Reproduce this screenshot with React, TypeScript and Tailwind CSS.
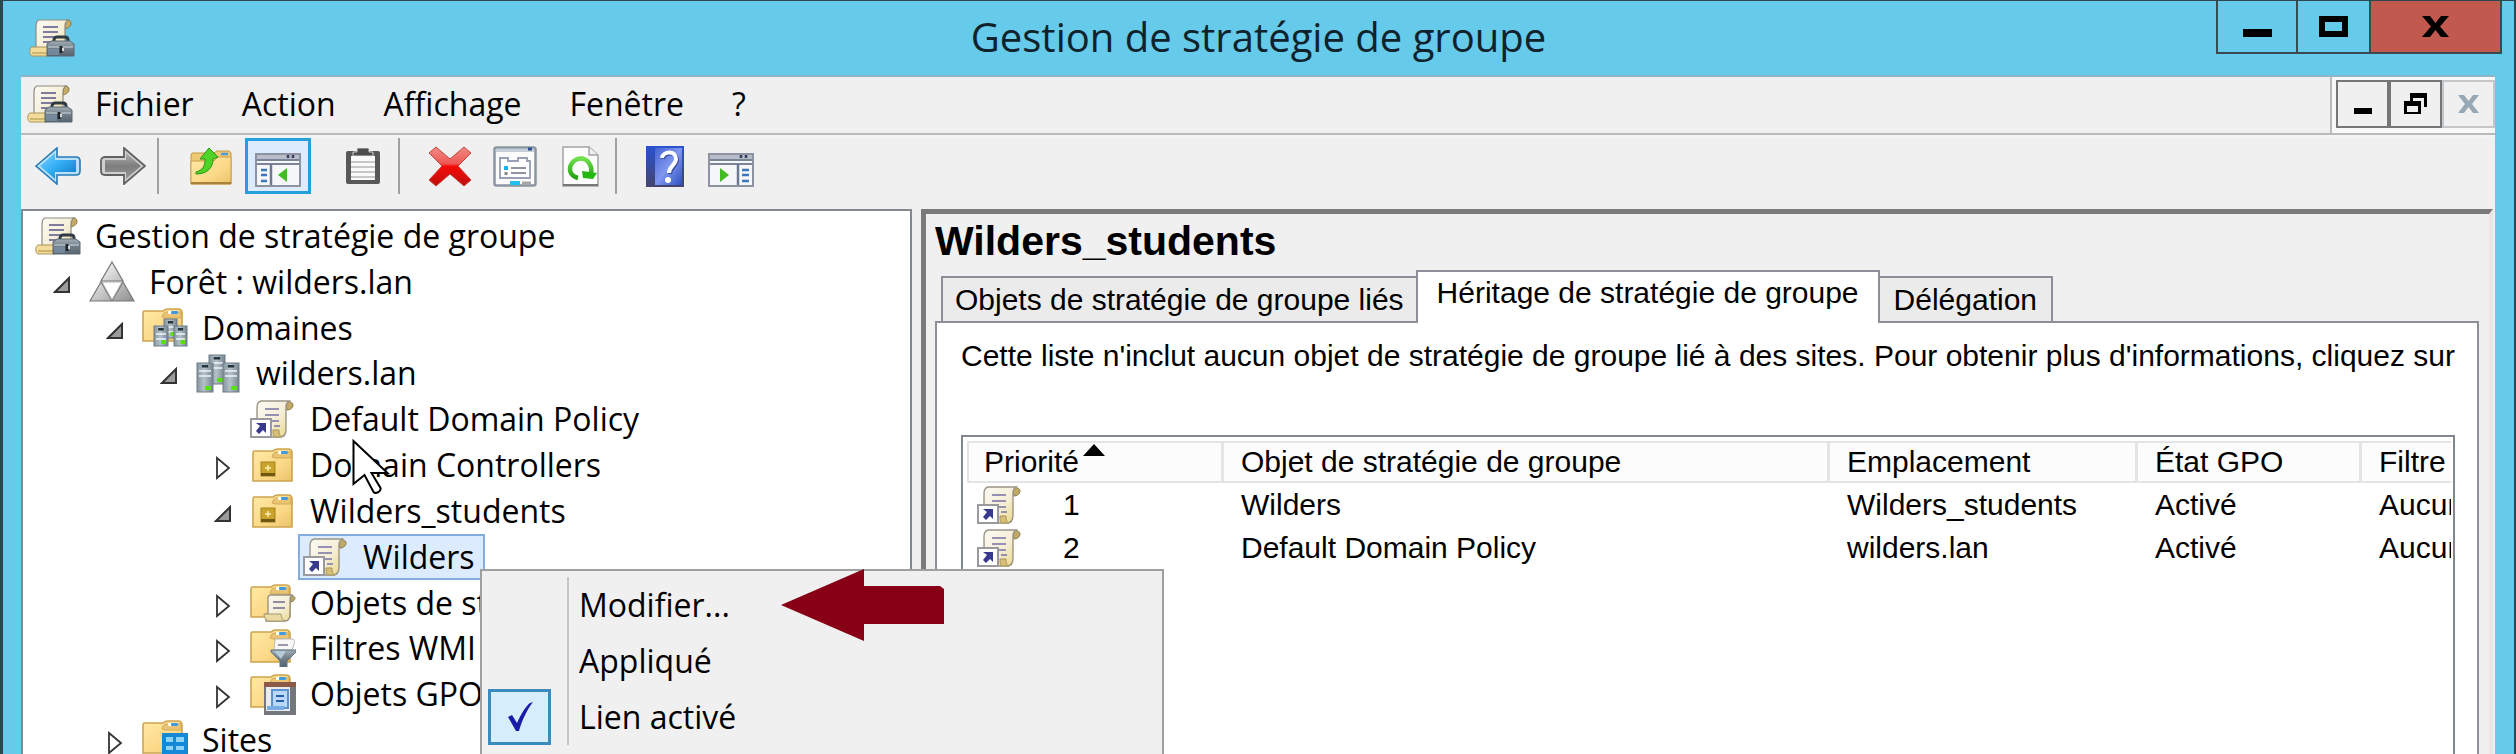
import type { ReactNode } from "react";

const UI = "font-['Open_Sans','Noto_Sans',sans-serif]";
const CLASSIC = "font-['Liberation_Sans',Arial,sans-serif]";

/* ---------- shared gradients ---------- */

function Gradients() {
  return (
    <svg width="0" height="0" className="absolute" aria-hidden="true">
      <defs>
        <linearGradient id="paper" x1="0" y1="0" x2="1" y2="1">
          <stop offset="0" stopColor="#fbfaf4" />
          <stop offset="0.55" stopColor="#f5eed6" />
          <stop offset="1" stopColor="#ead583" />
        </linearGradient>
        <linearGradient id="folder" x1="0" y1="0" x2="1" y2="1">
          <stop offset="0" stopColor="#ffe9a6" />
          <stop offset="0.6" stopColor="#fbd988" />
          <stop offset="1" stopColor="#ebc26c" />
        </linearGradient>
        <linearGradient id="server" x1="0" y1="0" x2="1" y2="0">
          <stop offset="0" stopColor="#8796a0" />
          <stop offset="0.45" stopColor="#b4c1c9" />
          <stop offset="1" stopColor="#76858f" />
        </linearGradient>
        <linearGradient id="steel" x1="0" y1="0" x2="0" y2="1">
          <stop offset="0" stopColor="#a3adb5" />
          <stop offset="0.5" stopColor="#6f7e89" />
          <stop offset="1" stopColor="#56646f" />
        </linearGradient>
        <linearGradient id="grey3d" x1="0" y1="0" x2="1" y2="1">
          <stop offset="0.2" stopColor="#f1f1f1" />
          <stop offset="1" stopColor="#8d8d8d" />
        </linearGradient>
        <linearGradient id="blueArrow" x1="0" y1="0" x2="1" y2="1">
          <stop offset="0" stopColor="#7fd0ff" />
          <stop offset="0.45" stopColor="#35b1f5" />
          <stop offset="1" stopColor="#0b74c4" />
        </linearGradient>
        <linearGradient id="greyArrow" x1="0" y1="0" x2="0" y2="1">
          <stop offset="0" stopColor="#b0b0b0" />
          <stop offset="0.5" stopColor="#7d7d7d" />
          <stop offset="1" stopColor="#989898" />
        </linearGradient>
        <linearGradient id="redX" x1="0" y1="0" x2="0" y2="1">
          <stop offset="0" stopColor="#f28b86" />
          <stop offset="0.42" stopColor="#ee5a55" />
          <stop offset="0.5" stopColor="#f50a08" />
          <stop offset="1" stopColor="#bd0f0c" />
        </linearGradient>
        <linearGradient id="help" x1="0" y1="0" x2="1" y2="1">
          <stop offset="0" stopColor="#4564d2" />
          <stop offset="0.5" stopColor="#7f97ee" />
          <stop offset="1" stopColor="#2f50c0" />
        </linearGradient>
        <linearGradient id="helpSpine" x1="0" y1="0" x2="0" y2="1">
          <stop offset="0" stopColor="#2a52d2" />
          <stop offset="1" stopColor="#45446f" />
        </linearGradient>
        <linearGradient id="green" x1="0" y1="0" x2="0" y2="1">
          <stop offset="0" stopColor="#6fe04a" />
          <stop offset="1" stopColor="#23a012" />
        </linearGradient>
      </defs>
    </svg>
  );
}

function Svg({ w, h, children }: { w: number; h: number; children: ReactNode }) {
  return (
    <svg width={w} height={h} viewBox={`0 0 ${w} ${h}`} fill="none" aria-hidden="true" className="block shrink-0">
      {children}
    </svg>
  );
}

/* ---------- tree and list icons ---------- */

function ConsoleIcon() {
  return (
    <Svg w={46} h={38}>
      <path d="M36 2c1-2 6-1 6 2 0 3-2 5-6 6z" fill="#c4ab66" stroke="#857848" />
      <path d="M10 1h29c-3 2-3 4-3 8v27H7V10c0-5 0-8 3-9z" fill="url(#paper)" stroke="#8f8b80" strokeWidth="1.2" />
      <path d="M14 8h15M14 13h15M14 18h13M14 23h8" stroke="#7f7b9d" strokeWidth="2" />
      <path d="M3 28h17v9H3c-3-1-3-8 0-9z" fill="#f3dc9a" stroke="#a8945a" />
      <path d="M3 34h16" stroke="#cfb670" strokeWidth="2" />
      <path d="M25 23v-2c0-2 2-3 3-3h8c2 0 3 1 3 3v2" stroke="#2f3a42" strokeWidth="3" />
      <path d="M18 25l4-3h19l4 3v12H18z" fill="url(#steel)" stroke="#5a6872" />
      <path d="M19 28h25" stroke="#b3bec6" strokeWidth="1.5" />
      <path d="M19 30h11v6H19z" fill="#7c93a8" opacity=".7" />
      <path d="M32 27v7" stroke="#20262b" strokeWidth="3" />
      <path d="M34 29v3" stroke="#fff" strokeWidth="1.5" />
    </Svg>
  );
}

function ScrollShape() {
  return (
    <>
      <path d="M36 3c0-2 7-2 7 2 0 3-3 5-6 5z" fill="#bfa964" stroke="#8a7d50" />
      <path d="M11 1h28c-3 2-3 4-3 8v20c0 4-1 8-6 8H7V11c0-6 0-9 4-10z" fill="url(#paper)" stroke="#9a9585" strokeWidth="1.4" />
      <path d="M15 9h14M15 15h14M15 21h14M24 26h6" stroke="#9691b0" strokeWidth="2" />
      <path d="M23 30h6c0 3 0 5 3 7h-7c-2 0-2-4-2-7z" fill="#d6bf77" stroke="#a8935a" />
    </>
  );
}

function GpoLinkIcon() {
  return (
    <Svg w={44} h={38}>
      <ScrollShape />
      <rect x="1" y="19" width="20" height="18" fill="#fff" stroke="#9a9a9e" strokeWidth="2" />
      <path d="M6 23h10v10l-3-3-4 4-3-3 4-5z" fill="#38388c" />
    </Svg>
  );
}

function ForestIcon() {
  return (
    <Svg w={46} h={41}>
      <path d="M23 1l11 19H12zM12 21l11 19H1zM34 21l11 19H23z" fill="url(#grey3d)" stroke="#777" strokeWidth="1.2" />
      <path d="M13 21h20L23 39z" fill="#fff" stroke="#999" strokeWidth=".8" />
    </Svg>
  );
}

function FolderShape() {
  return (
    <>
      <path d="M2 3h19c1-1 3-2 5-2h10c3 0 4 1 4 4v28H1V6c0-2 0-3 1-3z" fill="url(#folder)" stroke="#cda44e" strokeWidth="1.6" />
      <path d="M20 9c1-3 2-5 5-5h14v6H23z" fill="#eac374" stroke="#d3aa55" />
      <rect x="26" y="3" width="10" height="3" rx="1" fill="#fff" />
      <rect x="29" y="3" width="7" height="3" rx="1" fill="#3f9ae0" />
    </>
  );
}

function Server({ x, y, w, h }: { x: number; y: number; w: number; h: number }) {
  return (
    <g>
      <rect x={x} y={y} width={w} height={h} fill="url(#server)" stroke="#6d7c87" />
      <rect x={x + w * 0.3} y={y + 2} width={w * 0.4} height="2.5" fill="#26343e" />
      <path d={`M${x + 2} ${y + 8}h${w - 4}M${x + 2} ${y + 13}h${w - 4}`} stroke="#eef3f6" strokeWidth="1.5" />
      <rect x={x + w / 2} y={y + h - 6} width={w / 2 - 2} height="4" fill="#5ae00d" />
    </g>
  );
}

function DomainsIcon() {
  return (
    <Svg w={46} h={39}>
      <FolderShape />
      <Server x={22} y={11} w={13} h={19} />
      <Server x={12} y={18} w={14} h={20} />
      <Server x={32} y={18} w={13} h={20} />
    </Svg>
  );
}

function DomainIcon() {
  return (
    <Svg w={44} h={39}>
      <Server x={13} y={1} w={16} h={29} />
      <Server x={1} y={9} w={16} h={29} />
      <Server x={27} y={9} w={16} h={29} />
    </Svg>
  );
}

function OuIcon() {
  return (
    <Svg w={44} h={34}>
      <g transform="translate(2 0)">
        <FolderShape />
        <rect x="9" y="14" width="14" height="14" fill="#c9a32b" stroke="#a5831f" />
        <path d="M9 25h14v3H9z" fill="#6f5813" />
        <path d="M16 17v6M13 20h6" stroke="#fbeeb0" strokeWidth="1.5" />
      </g>
    </Svg>
  );
}

function GpoFolderIcon() {
  return (
    <Svg w={46} h={38}>
      <FolderShape />
      <path d="M40 13c1-2 5-1 5 1s-2 4-5 4z" fill="#b8a46a" stroke="#8a7d50" />
      <path d="M21 11h22c-3 1-3 3-3 6v13c0 4-1 7-5 7H16V30h2V16c0-3 0-5 3-5z" fill="url(#paper)" stroke="#959080" strokeWidth="1.3" />
      <path d="M23 18h12M23 24h12" stroke="#8f8c9f" strokeWidth="2" />
      <path d="M14 30h17c0 3 1 6 4 7H18c-3-1-4-5-4-7z" fill="#eadba4" stroke="#a8986a" />
    </Svg>
  );
}

function WmiFolderIcon() {
  return (
    <Svg w={46} h={38}>
      <FolderShape />
      <path d="M25 10h17c3 0 3 3 2 5l-2 6H24z" fill="#f7f7f5" stroke="#bbb" />
      <path d="M28 16h10" stroke="#8f8c9f" strokeWidth="1.8" />
      <path d="M21 21h25v2l-9 9v6h-7v-6l-9-9z" fill="url(#steel)" stroke="#5d7486" />
      <path d="M24 22h12l-5 8z" fill="#b6cad9" />
    </Svg>
  );
}

function StarterFolderIcon() {
  return (
    <Svg w={46} h={41}>
      <FolderShape />
      <rect x="15" y="9" width="30" height="31" fill="#e9ebef" stroke="#74767c" strokeWidth="2" />
      <path d="M42 12v27H16" stroke="#74767e" strokeWidth="4" />
      <path d="M14 8h32v5H14z" fill="#8d5a48" />
      <path d="M22 16h16v18H22z" fill="#b9d8f7" stroke="#5e92cf" strokeWidth="2" />
      <path d="M26 22h8M26 27h8" stroke="#285fa8" strokeWidth="2" />
      <path d="M17 32h17v4H17z" fill="#79ade4" />
    </Svg>
  );
}

function SitesIcon() {
  return (
    <Svg w={46} h={40}>
      <FolderShape />
      <rect x="20" y="13" width="26" height="27" fill="#1489d8" />
      <path d="M24 17h7v5h-7zM34 17h8v5h-8zM24 26h7v4h-7zM34 26h8v4h-8zM24 34h7v4h-7zM34 34h8v4h-8z" fill="#8fd3f8" />
    </Svg>
  );
}

function Expander({ open }: { open: boolean }) {
  return open ? (
    <Svg w={18} h={18}>
      <path d="M16 2v14H2z" fill="#9b9b9b" stroke="#333" strokeWidth="2" />
    </Svg>
  ) : (
    <Svg w={18} h={24}>
      <path d="M3 2v20L15 12z" fill="#fff" stroke="#333" strokeWidth="1.8" />
    </Svg>
  );
}

/* ---------- toolbar icons ---------- */

function BackIcon() {
  return (
    <Svg w={46} h={38}>
      <path d="M1 19L22 1v9h19c3 0 4 2 4 4v10c0 3-2 4-4 4H22v9z" fill="#b8e0fa" stroke="#2779b5" strokeWidth="1.6" />
      <path d="M5 19L20 6v7h21v12H20v7z" fill="url(#blueArrow)" />
    </Svg>
  );
}

function ForwardIcon() {
  return (
    <Svg w={46} h={38}>
      <path d="M45 19L24 1v9H5c-3 0-4 2-4 4v10c0 3 2 4 4 4h19v9z" fill="#cfcfcf" stroke="#616161" strokeWidth="1.8" />
      <path d="M41 19L26 6v7H5v12h21v7z" fill="url(#greyArrow)" />
    </Svg>
  );
}

function UpFolderIcon() {
  return (
    <Svg w={42} h={38}>
      <path d="M2 6h22l3-2h11c2 0 3 1 3 3v30H1V8z" fill="#eec873" stroke="#c2973e" />
      <path d="M1 14h23l4-4h13v27H1z" fill="url(#folder)" stroke="#cca04a" />
      <path d="M31 7h7" stroke="#4c9be0" strokeWidth="2.5" />
      <path d="M1 36h40" stroke="#a8823a" strokeWidth="2" />
      <path d="M6 25c7-2 9-6 9-13h-5l9-11 9 9-5 2c0 9-6 15-17 15z" fill="#4ed326" stroke="#299616" />
    </Svg>
  );
}

function PaneIcon({ side }: { side: "left" | "right" }) {
  const left = side === "left";
  return (
    <Svg w={46} h={34}>
      <rect x="1" y="1" width="44" height="32" fill="#f6f7f8" stroke="#8d93a0" strokeWidth="2" />
      <path d="M2 2h42v4H2z" fill="#b9bdc9" />
      <path d="M2 7h42M2 11h42" stroke="#7b8398" strokeWidth="1.8" />
      <path d="M33 2v3M38 2v3" stroke="#333f5c" strokeWidth="2.5" />
      <path d={left ? "M16 11v21" : "M30 11v21"} stroke="#6d7994" strokeWidth="2.5" />
      <path d={left ? "M6 17h6M6 22h6M6 28h6" : "M34 17h7M34 22h7M34 28h7"} stroke="#3d77bd" strokeWidth="2.6" />
      <path d={left ? "M32 15v14l-9-7z" : "M12 15v14l9-7z"} fill="#43bb22" />
    </Svg>
  );
}

function ClipboardIcon() {
  return (
    <Svg w={36} h={38}>
      <rect x="1" y="4" width="34" height="33" rx="2" fill="#585858" />
      <path d="M6 9h24v24H6z" fill="#fafafa" />
      <path d="M6 15h24M6 20h24M6 25h24M6 30h24" stroke="#b7b7b7" strokeWidth="1.5" />
      <path d="M12 1h12v4h4v4H8V5h4z" fill="#4d4d4d" stroke="#efefef" strokeWidth=".8" />
    </Svg>
  );
}

function DeleteIcon() {
  return (
    <Svg w={46} h={41}>
      <path d="M2 7l7-6 14 12L37 1l7 6-13 13 13 14-7 6-14-12L9 40l-7-6 13-14z" fill="url(#redX)" stroke="#c4433f" strokeLinejoin="round" />
    </Svg>
  );
}

function PropertiesIcon() {
  return (
    <Svg w={44} h={41}>
      <rect x="1.5" y="1.5" width="41" height="38" rx="2" fill="#fbfbfc" stroke="#8b95a0" strokeWidth="2.5" />
      <path d="M3 3h38v3H3z" fill="#c7d0da" />
      <path d="M35 3h4" stroke="#30518a" strokeWidth="3" />
      <path d="M7 12h8v3h10v-3h9v3h3v17H7z" fill="#fff" stroke="#9a9eb6" strokeWidth="1.8" />
      <path d="M13 20v4" stroke="#16b3ee" strokeWidth="4" />
      <path d="M18 22h15M18 27h15" stroke="#8f959f" strokeWidth="1.8" />
      <path d="M13 26v3" stroke="#888" strokeWidth="3" />
      <path d="M17 37h10" stroke="#1fc0f2" strokeWidth="4" />
      <path d="M29 37h9" stroke="#a5a5a5" strokeWidth="3" />
    </Svg>
  );
}

function RefreshIcon() {
  return (
    <Svg w={38} h={41}>
      <path d="M1 1h26l9 8v31H1z" fill="#fdfdfd" stroke="#a2a2a2" strokeWidth="1.5" />
      <path d="M27 1v8h9" fill="#eee" stroke="#a2a2a2" strokeWidth="1.5" />
      <path d="M1 39h35" stroke="#777" strokeWidth="2" />
      <path d="M16 32C8 30 6 23 10 17c5-6 13-6 17 0 2 3 3 6 2 10" stroke="url(#green)" strokeWidth="4.5" />
      <path d="M20 25l15 2-4 6-10-1z" fill="#22b80f" />
    </Svg>
  );
}

function HelpIcon() {
  return (
    <Svg w={38} h={41}>
      <rect x="0" y="0" width="38" height="41" fill="url(#helpSpine)" />
      <rect x="9" y="2" width="27" height="37" fill="url(#help)" />
      <path d="M16 12c1-7 14-8 14 1 0 6-7 7-7 14" stroke="#34489c" strokeWidth="4" transform="translate(1 1)" />
      <path d="M16 12c1-7 14-8 14 1 0 6-7 7-7 14" stroke="#fff" strokeWidth="4" />
      <circle cx="22" cy="34" r="3" fill="#fff" />
    </Svg>
  );
}

/* ---------- title bar ---------- */

function TitleBar() {
  return (
    <header className="relative flex h-[74px] items-start justify-between pl-[26px] pr-[12px]">
      <div className="flex h-full items-center">
        <ConsoleIcon />
      </div>
      <h1 className={`absolute inset-x-0 top-0 text-center text-[40px] leading-[72px] text-[#10222b] ${UI}`}>
        Gestion de stratégie de groupe
      </h1>
      <div className="relative flex h-[53px] border-x-2 border-b-2 border-[#3b4a52]">
        <button aria-label="Réduire" className="flex w-[80px] items-center justify-center border-r-2 border-[#3b4a52]">
          <Svg w={29} h={21}>
            <path d="M0 13h29v8H0z" fill="#000" />
          </Svg>
        </button>
        <button aria-label="Agrandir" className="flex w-[73px] items-center justify-center border-r-2 border-[#3b4a52]">
          <Svg w={29} h={21}>
            <path d="M3 3h23v15H3z" stroke="#000" strokeWidth="6" />
          </Svg>
        </button>
        <button aria-label="Fermer" className="flex w-[129px] items-center justify-center bg-[#c1594f]">
          <Svg w={27} h={21}>
            <path d="M0 0h8l5.500 7L19 0h8l-9 10.500L27 21h-8l-5.500-7L8 21H0l9-10.500z" fill="#000" />
          </Svg>
        </button>
      </div>
    </header>
  );
}

/* ---------- menu bar ---------- */

function MenuBar() {
  const items = ["Fichier", "Action", "Affichage", "Fenêtre", "?"];
  return (
    <div className="flex h-[58px] items-stretch justify-between border-b-2 border-[#b9bbba]">
      <nav className={`flex items-center gap-[48px] pb-[3px] pl-[6px] text-[32px] leading-[40px] text-black ${UI}`}>
        <div className="-mr-[26px]">
          <ConsoleIcon />
        </div>
        {items.map((t) => (
          <button key={t}>{t}</button>
        ))}
      </nav>
      <div className="flex items-center border-l-2 border-[#b9bbba] bg-[#f8f8f8] pb-[2px] pl-[4px]">
        <button aria-label="Réduire la fenêtre" className="flex h-[48px] w-[53px] items-center justify-center border-2 border-[#767676] bg-[#f0f0f0]">
          <Svg w={18} h={20}>
            <path d="M0 14h18v6H0z" fill="#000" />
          </Svg>
        </button>
        <button aria-label="Restaurer" className="flex h-[48px] w-[53px] items-center justify-center border-2 border-[#767676] bg-[#f0f0f0]">
          <Svg w={23} h={22}>
            <path d="M6 0h17v14h-3V5H9v3H6z" fill="#000" />
            <path d="M0 8h17v13H0zM3 13v6h11v-6z" fill="#000" fillRule="evenodd" />
          </Svg>
        </button>
        <button aria-label="Fermer la fenêtre" disabled className="flex h-[48px] w-[53px] items-center justify-center border-2 border-[#c3c7ca] bg-[#f0f0f0]">
          <Svg w={21} h={18}>
            <path d="M0 0h6l4.500 6L15 0h6l-7 9 7 9h-6l-4.500-6L6 18H0l7-9z" fill="#98a7b4" />
          </Svg>
        </button>
      </div>
    </div>
  );
}

/* ---------- toolbar ---------- */

function Tool({ label, active, children }: { label: string; active?: boolean; children: ReactNode }) {
  return (
    <button
      aria-label={label}
      aria-pressed={active}
      className={
        active
          ? "flex h-[56px] w-[66px] items-center justify-center border-[3px] border-[#26a0da] bg-[#dcebfe] pt-[8px]"
          : "flex h-[56px] items-center justify-center"
      }
    >
      {children}
    </button>
  );
}

function Divider() {
  return <div className="h-[56px] w-[2px] bg-[#a0a0a0]" />;
}

function Toolbar() {
  return (
    <div role="toolbar" className="flex h-[74px] items-start border-t-2 border-[#f1f4fa] pl-[14px] pt-[1px]">
      <div className="flex gap-[19px] pr-[11px]">
        <Tool label="Précédent"><BackIcon /></Tool>
        <Tool label="Suivant"><ForwardIcon /></Tool>
      </div>
      <Divider />
      <div className="flex items-center gap-[13px] pl-[31px]">
        <Tool label="Dossier parent"><UpFolderIcon /></Tool>
        <Tool label="Arborescence de la console" active><PaneIcon side="left" /></Tool>
      </div>
      <div className="flex pl-[34px] pr-[17px]">
        <Tool label="Copier"><ClipboardIcon /></Tool>
      </div>
      <Divider />
      <div className="flex gap-[20px] pl-[27px] pr-[15px]">
        <Tool label="Supprimer"><DeleteIcon /></Tool>
        <Tool label="Propriétés"><PropertiesIcon /></Tool>
        <div className="pl-[5px]">
          <Tool label="Actualiser"><RefreshIcon /></Tool>
        </div>
      </div>
      <Divider />
      <div className="flex gap-[24px] pl-[29px]">
        <Tool label="Aide"><HelpIcon /></Tool>
        <div className="pt-[4px]">
          <Tool label="Volet Actions"><PaneIcon side="right" /></Tool>
        </div>
      </div>
    </div>
  );
}

/* ---------- console tree ---------- */

type Node = { label: string; icon: ReactNode; pad: string; open?: boolean; selected?: boolean };

const nodes: Node[] = [
  { label: "Gestion de stratégie de groupe", icon: <ConsoleIcon />, pad: "pl-[12px]" },
  { label: "Forêt : wilders.lan", icon: <ForestIcon />, pad: "pl-[30px]", open: true },
  { label: "Domaines", icon: <DomainsIcon />, pad: "pl-[83px]", open: true },
  { label: "wilders.lan", icon: <DomainIcon />, pad: "pl-[137px]", open: true },
  { label: "Default Domain Policy", icon: <GpoLinkIcon />, pad: "pl-[227px]" },
  { label: "Domain Controllers", icon: <OuIcon />, pad: "pl-[191px]", open: false },
  { label: "Wilders_students", icon: <OuIcon />, pad: "pl-[191px]", open: true },
  { label: "Wilders", icon: <GpoLinkIcon />, pad: "pl-[275px]", selected: true },
  { label: "Objets de stratégie de groupe", icon: <GpoFolderIcon />, pad: "pl-[191px]", open: false },
  { label: "Filtres WMI", icon: <WmiFolderIcon />, pad: "pl-[191px]", open: false },
  { label: "Objets GPO Starter", icon: <StarterFolderIcon />, pad: "pl-[191px]", open: false },
  { label: "Sites", icon: <SitesIcon />, pad: "pl-[83px]", open: false },
];

function Tree() {
  return (
    <div className="w-[891px] shrink-0 overflow-hidden border-x-2 border-t-2 border-[#828790] bg-white pt-[2px]">
      <ul role="tree" className={`grid h-[550px] auto-rows-fr text-[32px] leading-[44px] text-black ${UI}`}>
        {nodes.map((n) => (
          <li
            key={n.label}
            role="treeitem"
            aria-selected={!!n.selected}
            aria-expanded={n.open}
            className={`flex items-center whitespace-nowrap ${n.pad}`}
          >
            {n.open !== undefined && (
              <span className="flex w-[36px] pt-[6px]">
                <Expander open={n.open} />
              </span>
            )}
            <span
              className={
                n.selected
                  ? "flex h-[46px] items-center border-2 border-[#84acdd] bg-[#dcebfe] pl-[3px] pr-[8px]"
                  : "flex h-[46px] items-center"
              }
            >
              <span className="flex w-[60px]">{n.icon}</span>
              {n.label}
            </span>
          </li>
        ))}
      </ul>
    </div>
  );
}

/* ---------- details pane ---------- */

const rows = [
  { rank: 1, name: "Wilders", place: "Wilders_students", state: "Activé", filter: "Aucun(e)" },
  { rank: 2, name: "Default Domain Policy", place: "wilders.lan", state: "Activé", filter: "Aucun(e)" },
];

function HeaderCell({ children, first }: { children: ReactNode; first?: boolean }) {
  return (
    <th className={`border-y-2 border-r-[3px] border-[#e4e4e4] bg-[#fcfcfc] p-0 text-left font-normal ${first ? "border-l-2 pl-[15px]" : "pl-[17px]"}`}>
      {children}
    </th>
  );
}

function InheritanceTable() {
  return (
    <div className="flex-1 overflow-hidden border-x-2 border-t-2 border-[#828790] bg-white pl-[4px] pr-[2px] pt-[4px]">
      <div className="overflow-hidden">
        <table className="w-[1640px] table-fixed border-separate border-spacing-0 whitespace-nowrap text-[30px] leading-[36px]">
          <colgroup>
            <col className="w-[257px]" />
            <col className="w-[606px]" />
            <col className="w-[308px]" />
            <col className="w-[224px]" />
            <col />
          </colgroup>
          <thead>
            <tr className="h-[42px]">
              <HeaderCell first>
                <span className="flex items-start gap-[4px]">
                  Priorité
                  <Svg w={22} h={12}>
                    <path d="M11 0l11 12H0z" fill="#000" />
                  </Svg>
                </span>
              </HeaderCell>
              <HeaderCell>Objet de stratégie de groupe</HeaderCell>
              <HeaderCell>Emplacement</HeaderCell>
              <HeaderCell>État GPO</HeaderCell>
              <HeaderCell>Filtre WMI</HeaderCell>
            </tr>
          </thead>
          <tbody>
            {rows.map((r) => (
              <tr key={r.rank} className="h-[43px]">
                <td className="p-0 pl-[10px]">
                  <span className="flex items-center gap-[42px]">
                    <GpoLinkIcon />
                    {r.rank}
                  </span>
                </td>
                <td className="p-0 pl-[17px]">{r.name}</td>
                <td className="p-0 pl-[17px]">{r.place}</td>
                <td className="p-0 pl-[17px]">{r.state}</td>
                <td className="p-0 pl-[17px]">{r.filter}</td>
              </tr>
            ))}
          </tbody>
        </table>
      </div>
    </div>
  );
}

function Details() {
  const tab = "border-x-2 border-t-2 border-[#8c8e98] whitespace-nowrap";
  return (
    <section className={`mr-[2px] flex min-w-0 flex-1 flex-col border-l-[5px] border-r-4 border-t-[5px] border-[#7a7a7a] border-r-[#e6e6e6] bg-[#f0f0f0] pl-[9px] pr-[10px] text-black ${CLASSIC}`}>
      <h2 className="pt-[5px] text-[41px] font-bold leading-[44px]">Wilders_students</h2>
      <div role="tablist" className="relative z-10 -mb-[2px] mt-[7px] flex items-end pl-[6px] text-[30px] leading-[34px]">
        <button role="tab" aria-selected="false" className={`${tab} mb-[2px] h-[45px] border-r-0 bg-[#ebebeb] px-[12px]`}>
          Objets de stratégie de groupe liés
        </button>
        <button role="tab" aria-selected="true" className={`${tab} h-[53px] bg-white px-[19px] pb-[10px]`}>
          Héritage de stratégie de groupe
        </button>
        <button role="tab" aria-selected="false" className={`${tab} mb-[2px] h-[45px] border-l-0 bg-[#ebebeb] px-[14px]`}>
          Délégation
        </button>
      </div>
      <div role="tabpanel" className="flex flex-1 flex-col border-x-2 border-t-2 border-[#8c8e98] bg-white pl-[24px] pr-[22px] pt-[14px]">
        <p className="overflow-hidden whitespace-nowrap pb-[60px] text-[30px] leading-[38px]">
          Cette liste n'inclut aucun objet de stratégie de groupe lié à des sites. Pour obtenir plus d'informations, cliquez sur
        </p>
        <InheritanceTable />
      </div>
    </section>
  );
}

/* ---------- overlays ---------- */

function ContextMenu() {
  return (
    <div role="menu" className={`absolute left-[477px] top-[568px] flex w-[684px] border-2 border-[#a0a0a0] bg-[#f0f0f0] pb-[60px] text-[32px] leading-[56px] text-black ${UI}`}>
      <div className="flex w-[85px] flex-col pl-[6px] pt-[118px]">
        <div className="flex h-[56px] w-[63px] items-center justify-center border-[3px] border-[#3c8bbf] bg-[#d6edfb]">
          <Svg w={28} h={30}>
            <path d="M2 15l4-2 5 8C15 12 20 4 24 1l3-1C21 8 16 18 13 29h-3z" fill="#1a1aa8" />
          </Svg>
        </div>
      </div>
      <div className="mt-[6px] flex flex-1 flex-col items-stretch border-l-2 border-[#c6c6c6]">
        <button role="menuitem" className="pl-[10px] text-left">Modifier...</button>
        <button role="menuitem" className="pl-[10px] text-left">Appliqué</button>
        <button role="menuitemcheckbox" aria-checked="true" className="pl-[10px] text-left">Lien activé</button>
      </div>
      <div className="absolute left-[298px] top-[-2px]">
        <Svg w={166} h={72}>
          <path d="M1 36L84 0v17h76l4 3v35H84v17z" fill="#880015" />
        </Svg>
      </div>
    </div>
  );
}

function Pointer() {
  return (
    <div className="absolute left-[349px] top-[438px]">
      <Svg w={38} h={56}>
        <path d="M1.500 2v43l11-9 9 17c2 2 8 0 7-4l-9-15h16z" fill="#fff" stroke="#000" strokeWidth="2" />
      </Svg>
    </div>
  );
}

export default function App() {
  return (
    <div className="relative flex h-screen flex-col overflow-hidden border-l-[3px] border-r-2 border-t border-[#2f4650] bg-[#66caea]">
      <Gradients />
      <TitleBar />
      <main className="ml-[18px] mr-[19px] flex min-h-0 flex-1 flex-col border-t-2 border-[#8fb4c8] bg-[#f0f0f0]">
        <MenuBar />
        <Toolbar />
        <div className="flex min-h-0 flex-1 gap-[9px]">
          <Tree />
          <Details />
        </div>
      </main>
      <Pointer />
      <ContextMenu />
    </div>
  );
}
